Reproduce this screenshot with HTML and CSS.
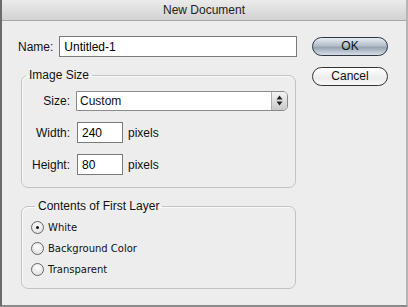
FILE: index.html
```html
<!DOCTYPE html>
<html lang="en">
<head>
    <meta charset="UTF-8">
    <title>New Document</title>
    <link rel="stylesheet" href="styles.css">
</head>
<body>
    <div class="dialog">
        <div class="titlebar">New Document</div>
        <div class="content">
            <div class="main">
                <div class="namerow">
                    <label for="name">Name:</label>
                    <input type="text" id="name" class="field namefield" value="Untitled-1">
                </div>

                <fieldset class="group sizegroup">
                    <legend>Image Size</legend>
                    <div class="row">
                        <label>Size:</label>
                        <div class="select">
                            <span>Custom</span>
                            <span class="stepper">
                                <svg width="7" height="11" viewBox="0 0 7 11"><path d="M3.5 0.5 L6.5 4.5 L0.5 4.5 Z M3.5 10.5 L6.5 6.5 L0.5 6.5 Z" fill="#222"/></svg>
                            </span>
                        </div>
                    </div>
                    <div class="row">
                        <label>Width:</label>
                        <input type="text" class="field small" value="240">
                        <span class="unit">pixels</span>
                    </div>
                    <div class="row">
                        <label>Height:</label>
                        <input type="text" class="field small" value="80">
                        <span class="unit">pixels</span>
                    </div>
                </fieldset>

                <fieldset class="group layergroup">
                    <legend>Contents of First Layer</legend>
                    <div class="radio"><span class="dot on"></span>White</div>
                    <div class="radio"><span class="dot"></span>Background Color</div>
                    <div class="radio"><span class="dot"></span>Transparent</div>
                </fieldset>
            </div>

            <div class="buttons">
                <div class="btn ok">OK</div>
                <div class="btn cancel">Cancel</div>
            </div>
        </div>
    </div>
</body>
</html>
```

FILE: styles.css
```css
body{
    margin:0px;
    background-color:#ececec;
    font-family:"Liberation Sans", Arial, sans-serif;
    font-size:12px;
    color:#111;
}
.dialog{
    width:404px;
    height:305px;
    border-left:2px solid #6b6b6b;
    border-right:2px solid #b5b5b5;
    border-bottom:2px solid #8a8a8a;
    background-color:#ededed;
}
.titlebar{
    height:20px;
    line-height:20px;
    text-align:center;
    background:linear-gradient(#ebebeb, #d2d2d2);
    border-bottom:1px solid #a8a8a8;
    color:#222;
}
.content{
    display:flex;
    padding-top:15px;
}
.main{
    width:294px;
    margin-left:16px;
}
.namerow{
    display:flex;
    align-items:center;
    gap:6px;
}
.field{
    font-family:inherit;
    font-size:12px;
    border:1px solid #7a7a7a;
    background:white;
    box-sizing:border-box;
    height:21px;
    padding:0 4px;
    margin:0;
    outline:none;
}
.namefield{
    width:238px;
}
.group{
    border:1px solid #c3c3c3;
    border-radius:7px;
    margin:0 0 0 3px;
    padding:0;
    width:275px;
    box-sizing:border-box;
    box-shadow:inset 1px 1px 0 #fafafa;
}
.group legend{
    padding:0 3px;
    margin-left:4px;
    font-size:12px;
}
.sizegroup{
    margin-top:11px;
    height:120px;
    padding-top:8px;
}
.row{
    display:flex;
    align-items:center;
    height:21px;
    margin-bottom:11px;
}
.row label{
    width:48px;
    text-align:right;
    margin-right:6px;
}
.select{
    width:212px;
    height:20px;
    box-sizing:border-box;
    border:1px solid #8a8a8a;
    border-radius:0 5px 5px 0;
    background:white;
    display:flex;
    align-items:center;
    justify-content:space-between;
    padding-left:3px;
}
.stepper{
    width:15px;
    height:18px;
    border-left:1px solid #b0b0b0;
    border-radius:0 4px 4px 0;
    background:linear-gradient(#f4f4f4, #c9c9c9);
    display:flex;
    align-items:center;
    justify-content:center;
}
.small{
    width:46px;
    margin-left:1px;
}
.unit{
    margin-left:5px;
}
.layergroup{
    margin-top:11px;
    height:90px;
    padding-top:4px;
    padding-left:9px;
}
.radio{
    display:flex;
    align-items:center;
    height:21px;
    font-size:10px;
    font-family:"DejaVu Sans", sans-serif;
}
.dot{
    width:11px;
    height:11px;
    border:1px solid #666;
    border-radius:50%;
    background:radial-gradient(circle at 50% 35%, #ffffff, #d8d8d8);
    margin-right:4px;
    display:flex;
    align-items:center;
    justify-content:center;
}
.dot.on::after{
    content:"";
    width:3px;
    height:3px;
    border-radius:50%;
    background:#111;
}
.buttons{
    margin-left:0;
    display:flex;
    flex-direction:column;
    gap:11px;
    padding-top:1px;
}
.btn{
    width:76px;
    height:19px;
    line-height:17px;
    box-sizing:border-box;
    border:1px solid #333;
    border-radius:10px;
    text-align:center;
    font-size:12px;
}
.ok{
    background:linear-gradient(#e6ecf2 0%, #b4bfca 45%, #97a4b2 55%, #d6dee7 100%);
    border-color:#2d3540;
}
.cancel{
    background:linear-gradient(#ffffff, #ececec 60%, #f8f8f8);
}
```
